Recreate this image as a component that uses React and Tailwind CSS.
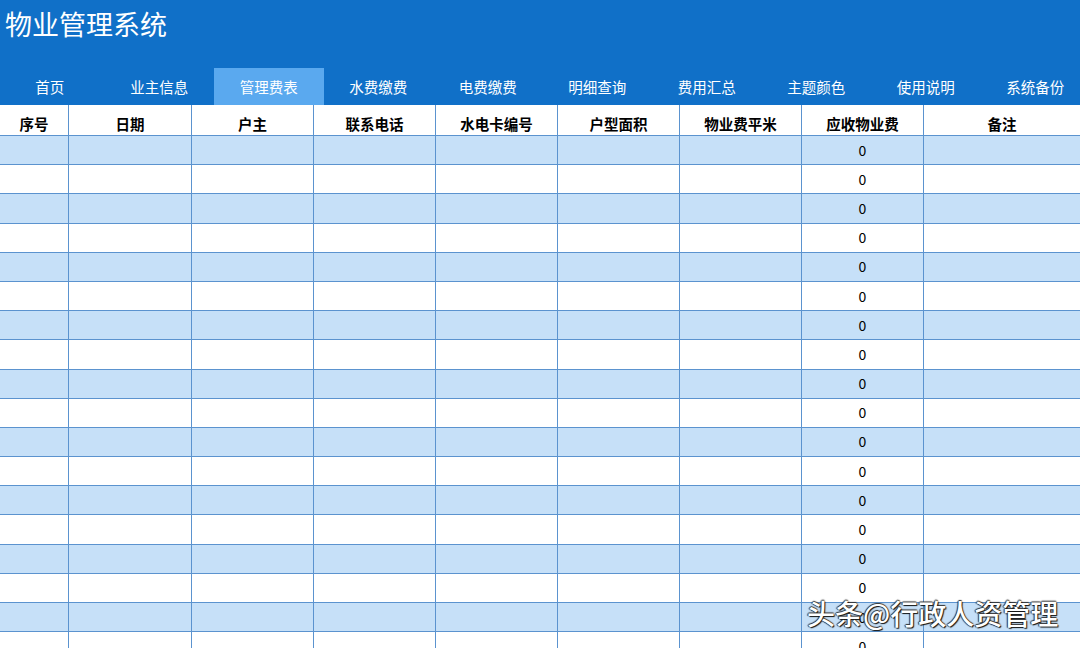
import React from "react";

const tabs = ["首页", "业主信息", "管理费表", "水费缴费", "电费缴费", "明细查询", "费用汇总", "主题颜色", "使用说明", "系统备份"];
const cols = [
  { name: "序号", w: "w-[69px]" },
  { name: "日期", w: "w-[123px]" },
  { name: "户主", w: "w-[122px]" },
  { name: "联系电话", w: "w-[122px]" },
  { name: "水电卡编号", w: "w-[122px]" },
  { name: "户型面积", w: "w-[122px]" },
  { name: "物业费平米", w: "w-[122px]" },
  { name: "应收物业费", w: "w-[122px]" },
  { name: "备注", w: "flex-1" },
];
const rows = Array.from({ length: 18 });

export default function App() {
  return (
    <div className="relative h-[648px] w-[1080px] overflow-hidden bg-white font-['Noto_Sans_CJK_SC',sans-serif]">
      {/* Header */}
      <header className="h-[105px] bg-[#1070c8] flex flex-col">
        <h1 className="h-[68px] pl-[5px] pt-[5px] text-[27px] leading-[38px] text-white">物业管理系统</h1>
        <nav className="ml-[-5px] flex h-[37px]">
          {tabs.map((t) => (
            <div
              key={t}
              className={`flex w-[109.5px] shrink-0 items-center justify-center text-[14.5px] text-white ${
                t === "管理费表" ? "bg-[#5aa9ef]" : ""
              }`}
            >
              {t}
            </div>
          ))}
        </nav>
      </header>

      {/* Table */}
      <div className="flex flex-col">
        <div className="flex h-[31px] border-b border-[#5b93cf]">
          {cols.map((c, i) => (
            <div
              key={c.name}
              className={`${c.w} flex items-center justify-center pt-[7px] text-[14.5px] font-bold text-black ${
                i < cols.length - 1 ? "border-r border-[#5b93cf]" : ""
              }`}
            >
              {c.name}
            </div>
          ))}
        </div>
        {rows.map((_, r) => (
          <div key={r} className={`flex h-[29.2px] shrink-0 border-b border-[#5b93cf] ${r % 2 === 0 ? "bg-[#c6e0f8]" : "bg-white"}`}>
            {cols.map((c, i) => (
              <div
                key={c.name}
                className={`${c.w} flex items-center justify-center text-[14px] text-black ${
                  i < cols.length - 1 ? "border-r border-[#5b93cf]" : ""
                }`}
              >
                {i === 7 ? "0" : ""}
              </div>
            ))}
          </div>
        ))}
      </div>

      {/* Watermark */}
      <div className="absolute left-[807px] top-[594px] text-[28px] font-medium leading-[38px] text-white [text-shadow:1px_1px_1px_#111,-1px_0_1px_#333,0_-1px_1px_#333]">
        头条@行政人资管理
      </div>
    </div>
  );
}
